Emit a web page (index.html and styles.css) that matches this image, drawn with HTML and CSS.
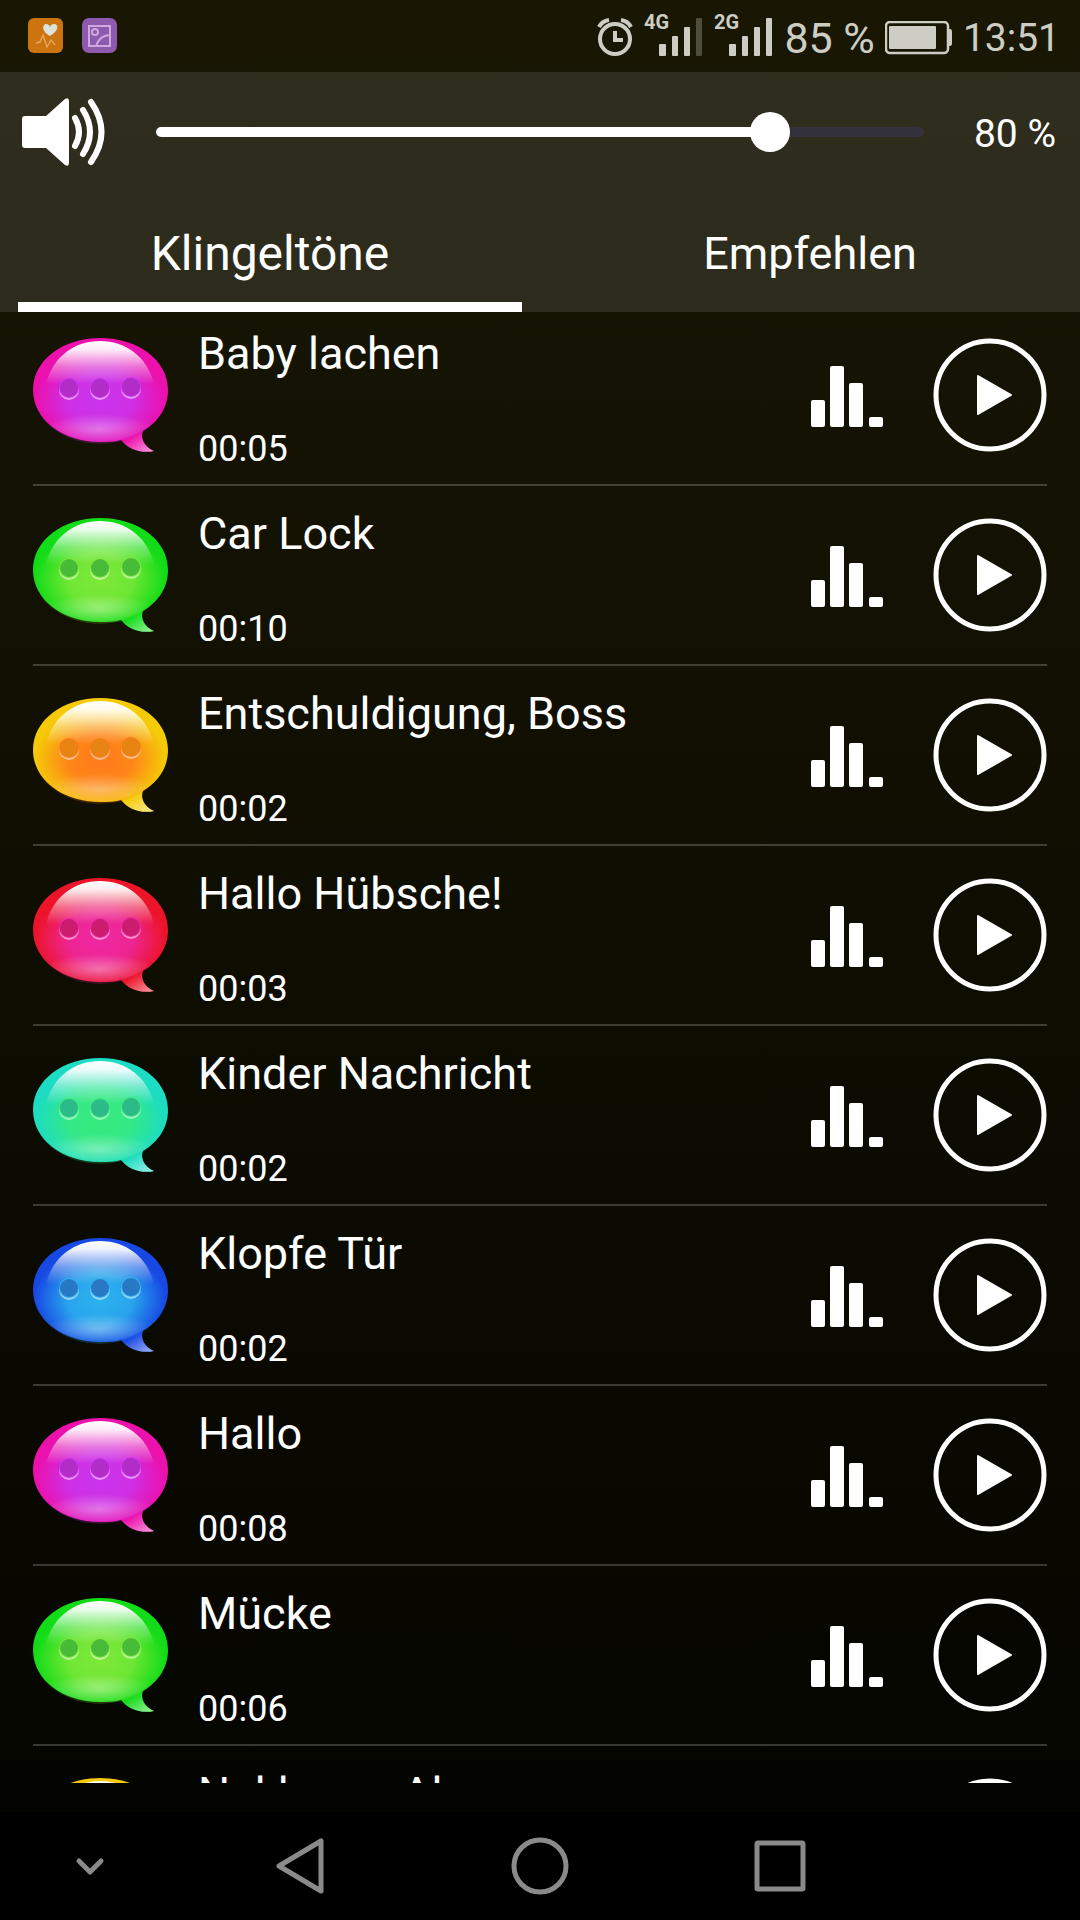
FILE: index.html
```html
<!DOCTYPE html>
<html lang="de">
<head>
<meta charset="utf-8">
<meta name="viewport" content="width=device-width, initial-scale=1">
<title>Klingeltöne</title>
<link rel="stylesheet" href="styles.css">
</head>
<body>
<svg class="sprite" aria-hidden="true">
  <defs>
    <radialGradient id="core-fade" cx="0.5" cy="0.55" r="0.5">
      <stop offset="0" stop-color="#fff"/>
      <stop offset="0.5" stop-color="#fff" stop-opacity="0.85"/>
      <stop offset="1" stop-color="#fff" stop-opacity="0"/>
    </radialGradient>
    <mask id="core-mask" maskContentUnits="userSpaceOnUse">
      <ellipse cx="67" cy="56" rx="66" ry="50" fill="url(#core-fade)"/>
    </mask>
    <clipPath id="body-clip"><ellipse cx="67" cy="52" rx="67" ry="52"/></clipPath>
    <linearGradient id="gloss" x1="0" y1="0" x2="0" y2="1">
      <stop offset="0" stop-color="#fff"/>
      <stop offset="0.2" stop-color="#fff" stop-opacity="0.92"/>
      <stop offset="0.6" stop-color="#fff" stop-opacity="0.38"/>
      <stop offset="1" stop-color="#fff" stop-opacity="0"/>
    </linearGradient>
    <radialGradient id="glow" cx="0.5" cy="0.5" r="0.5">
      <stop offset="0" stop-color="#fff" stop-opacity="0.35"/>
      <stop offset="1" stop-color="#fff" stop-opacity="0"/>
    </radialGradient>
    <linearGradient id="tail-shine" x1="0" y1="0" x2="1" y2="1">
      <stop offset="0.3" stop-color="#fff" stop-opacity="0"/>
      <stop offset="1" stop-color="#fff" stop-opacity="0.6"/>
    </linearGradient>
  </defs>
  <symbol id="bubble" viewBox="0 0 136 115">
    <path class="bubble-edge" d="M67 0C105 0 135 22 135 52C135 70 125 84 110 93C107 101 112 109 121 113C108 116 95 111 88 102C82 104 74 104 67 104C30 104 0 82 0 52C0 22 30 0 67 0Z"/>
    <ellipse class="bubble-core" cx="67" cy="56" rx="66" ry="50" mask="url(#core-mask)"/>
    <ellipse cx="66" cy="91" rx="56" ry="15" fill="url(#glow)" clip-path="url(#body-clip)"/>
    <path d="M88 98L110 93C107 101 112 109 121 113C108 116 95 111 88 102Z" fill="url(#tail-shine)"/>
    <path d="M67 3C92 3 114 18 121 46H13C20 18 42 3 67 3Z" fill="url(#gloss)"/>
    <g fill="#fff" opacity="0.5"><circle cx="36" cy="52" r="10"/><circle cx="67" cy="52" r="10"/><circle cx="98" cy="51" r="10"/></g>
    <g class="bubble-core"><circle cx="36" cy="50" r="10"/><circle cx="67" cy="50" r="10"/><circle cx="98" cy="49" r="10"/></g>
    <g class="bubble-dot"><circle cx="36" cy="50" r="9"/><circle cx="67" cy="50" r="9"/><circle cx="98" cy="49" r="9"/></g>
  </symbol>
  <symbol id="levels" viewBox="0 0 72 115">
    <rect x="0" y="62" width="14" height="27" rx="2"/><rect x="19" y="28" width="14" height="61" rx="2"/><rect x="38" y="45" width="14" height="44" rx="2"/><rect x="58" y="79" width="14" height="10" rx="2"/>
  </symbol>
  <symbol id="play" viewBox="0 0 115 115">
    <circle cx="58" cy="57" r="54" fill="none" stroke="#fff" stroke-width="5"/>
    <path d="M46 38L79 57L46 76Z" stroke="#fff" stroke-width="2" stroke-linejoin="round"/>
  </symbol>
</svg>

<div class="phone">
  <header class="status">
    <div class="status-apps">
      <svg class="app-icon" viewBox="0 0 36 36" aria-hidden="true">
        <rect width="35" height="35" rx="6" fill="#cc7410"/>
        <path d="M22 18C12 12 15 5 19 6Q22 7 22 9Q23 6 26 6C31 6 31 13 22 18Z" fill="#dce3dc"/>
        <path d="M8 25L12 24L15 17L19 29L23 22L27 27" fill="none" stroke="#e8a25a" stroke-width="1.5"/>
      </svg>
      <svg class="app-icon" viewBox="0 0 36 36" aria-hidden="true">
        <rect width="35" height="35" rx="7" fill="#8d5aad"/>
        <g fill="none" stroke="#cfa8e2" stroke-width="2"><rect x="7" y="8" width="21" height="20"/><circle cx="13" cy="14" r="3"/><path d="M14 28Q18 17 28 17"/></g>
      </svg>
    </div>
    <div class="status-info">
      <svg class="alarm" viewBox="0 0 38 40" aria-hidden="true">
        <g fill="none" stroke="currentColor" stroke-width="4"><circle cx="19" cy="23" r="15"/><path d="M19 15V24H27M3 11Q6 5 13 4M35 11Q32 5 25 4"/></g>
      </svg>
      <svg class="signal" viewBox="0 -4 60 54">
        <text x="0" y="16" class="signal-label">4G</text>
        <g fill="currentColor"><rect x="15" y="31" width="7" height="12" rx="1"/><rect x="28" y="23" width="6" height="20" rx="1"/><rect x="40" y="14" width="6" height="29" rx="1"/><rect x="52" y="5" width="6" height="38" rx="1" opacity="0.3"/></g>
      </svg>
      <svg class="signal" viewBox="0 -4 60 54">
        <text x="0" y="16" class="signal-label">2G</text>
        <g fill="currentColor"><rect x="15" y="31" width="7" height="12" rx="1"/><rect x="28" y="23" width="6" height="20" rx="1"/><rect x="40" y="14" width="6" height="29" rx="1"/><rect x="52" y="5" width="6" height="38" rx="1"/></g>
      </svg>
      <span class="charge">85 %</span>
      <svg class="battery" viewBox="0 0 68 34" aria-hidden="true">
        <rect x="1" y="1" width="62" height="31" rx="4" fill="none" stroke="currentColor" stroke-width="2.5"/>
        <rect x="4" y="5" width="47" height="23" rx="1" fill="currentColor"/><path d="M63 8H65Q67 8 67 11V22Q67 25 65 25H63Z" fill="currentColor"/>
      </svg>
      <time class="clock">13:51</time>
    </div>
  </header>

  <section class="panel">
    <div class="volume">
      <label class="speaker" for="volume" aria-label="Lautstärke">
        <svg viewBox="0 0 84 68" aria-hidden="true">
          <path d="M3 18H24L43 1Q47 -1 47 3V65Q47 69 43 67L24 50H3Q0 50 0 47V21Q0 18 3 18Z" fill="#fff"/>
          <g fill="none" stroke="#fff" stroke-width="6" stroke-linecap="round"><path d="M53 20Q61 34 53 48"/><path d="M61 12Q75 34 61 56"/><path d="M69 4Q90 34 69 64"/></g>
        </svg>
      </label>
      <div class="slider"><input id="volume" type="range" min="0" max="100" value="80"></div>
      <output class="volume-value" for="volume">80 %</output>
    </div>
    <div class="tabs" role="tablist">
      <button class="tab tab-active" role="tab" aria-selected="true">Klingeltöne</button>
      <button class="tab" role="tab" aria-selected="false">Empfehlen</button>
    </div>
  </section>

  <ul class="tones">
    <li class="tone pink"><svg class="bubble"><use href="#bubble"/></svg><div class="tone-text"><span class="title">Baby lachen</span><time class="length">00:05</time></div><svg class="levels"><use href="#levels"/></svg><button class="play" aria-label="Abspielen"><svg><use href="#play"/></svg></button></li>
    <li class="tone green"><svg class="bubble"><use href="#bubble"/></svg><div class="tone-text"><span class="title">Car Lock</span><time class="length">00:10</time></div><svg class="levels"><use href="#levels"/></svg><button class="play" aria-label="Abspielen"><svg><use href="#play"/></svg></button></li>
    <li class="tone yellow"><svg class="bubble"><use href="#bubble"/></svg><div class="tone-text"><span class="title">Entschuldigung, Boss</span><time class="length">00:02</time></div><svg class="levels"><use href="#levels"/></svg><button class="play" aria-label="Abspielen"><svg><use href="#play"/></svg></button></li>
    <li class="tone red"><svg class="bubble"><use href="#bubble"/></svg><div class="tone-text"><span class="title">Hallo Hübsche!</span><time class="length">00:03</time></div><svg class="levels"><use href="#levels"/></svg><button class="play" aria-label="Abspielen"><svg><use href="#play"/></svg></button></li>
    <li class="tone mint"><svg class="bubble"><use href="#bubble"/></svg><div class="tone-text"><span class="title">Kinder Nachricht</span><time class="length">00:02</time></div><svg class="levels"><use href="#levels"/></svg><button class="play" aria-label="Abspielen"><svg><use href="#play"/></svg></button></li>
    <li class="tone blue"><svg class="bubble"><use href="#bubble"/></svg><div class="tone-text"><span class="title">Klopfe Tür</span><time class="length">00:02</time></div><svg class="levels"><use href="#levels"/></svg><button class="play" aria-label="Abspielen"><svg><use href="#play"/></svg></button></li>
    <li class="tone pink"><svg class="bubble"><use href="#bubble"/></svg><div class="tone-text"><span class="title">Hallo</span><time class="length">00:08</time></div><svg class="levels"><use href="#levels"/></svg><button class="play" aria-label="Abspielen"><svg><use href="#play"/></svg></button></li>
    <li class="tone green"><svg class="bubble"><use href="#bubble"/></svg><div class="tone-text"><span class="title">Mücke</span><time class="length">00:06</time></div><svg class="levels"><use href="#levels"/></svg><button class="play" aria-label="Abspielen"><svg><use href="#play"/></svg></button></li>
    <li class="tone yellow"><svg class="bubble"><use href="#bubble"/></svg><div class="tone-text"><span class="title">Nuklearer Alarm</span></div><svg class="levels"><use href="#levels"/></svg><button class="play" aria-label="Abspielen"><svg><use href="#play"/></svg></button></li>
  </ul>

  <nav class="nav">
    <button aria-label="Leiste ausblenden"><svg viewBox="0 0 60 60"><path d="M19 25L30 36L41 25"/></svg></button>
    <button aria-label="Zurück"><svg viewBox="0 0 60 60"><path d="M9 30L51 5V55Z"/></svg></button>
    <button aria-label="Startseite"><svg viewBox="0 0 60 60"><circle cx="30" cy="30" r="26"/></svg></button>
    <button aria-label="Übersicht"><svg viewBox="0 0 60 60"><rect x="7" y="7" width="46" height="46" rx="1"/></svg></button>
  </nav>
</div>
</body>
</html>
```
FILE: styles.css
```css
* {
  box-sizing: border-box;
}

body {
  margin: 0;
  background: #000;
  color: #fff;
  font-family: Roboto, "Noto Sans", sans-serif;
}

button {
  padding: 0;
  border: 0;
  background: none;
  color: inherit;
  font: inherit;
}

svg {
  display: block;
}

.sprite {
  position: absolute;
  width: 0;
  height: 0;
}

.phone {
  display: flex;
  flex-direction: column;
  height: 100vh;
  background: linear-gradient(#191704, #050500 94%);
}

/* Status bar */
.status {
  display: flex;
  flex: none;
  justify-content: space-between;
  align-items: center;
  height: 72px;
  padding: 0 20px 0 28px;
  color: #cdcdc4;
}

.status-apps {
  display: flex;
  gap: 18px;
}

.app-icon {
  width: 36px;
  height: 36px;
}

.status-info {
  display: flex;
  align-items: center;
  gap: 10px;
}

.alarm {
  width: 38px;
  height: 40px;
}

.signal {
  width: 60px;
  height: 54px;
}

.signal-label {
  fill: currentColor;
  font-size: 20px;
  font-weight: 700;
}

.charge {
  padding-top: 4px;
  font-size: 43px;
}

.battery {
  width: 68px;
  height: 34px;
  margin-top: 4px;
}

.clock {
  padding-top: 4px;
  font-size: 39px;
}

/* Volume and tabs */
.panel {
  flex: none;
  background: rgba(255, 255, 255, 0.1);
}

.volume {
  display: flex;
  align-items: center;
  height: 120px;
  padding: 0 24px 0 22px;
}

.speaker {
  width: 84px;
}

.slider {
  position: relative;
  flex: 1;
  margin: 0 30px;
}

.slider::before {
  content: "";
  position: absolute;
  inset: 15px 20px;
  border-radius: 5px;
  background: linear-gradient(90deg, #fff 80%, #33313a 80%);
}

.slider input {
  position: relative;
  display: block;
  width: 100%;
  height: 40px;
  margin: 0;
  background: none;
  appearance: none;
}

.slider input::-webkit-slider-thumb {
  width: 40px;
  height: 40px;
  border-radius: 50%;
  background: #fff;
  appearance: none;
}

.volume-value {
  padding-top: 4px;
  font-size: 39px;
}

.tabs {
  display: grid;
  grid-template-columns: 1fr 1fr;
  height: 120px;
}

.tab {
  margin: 0 18px;
  padding-top: 12px;
  border-bottom: 10px solid transparent;
  font-size: 45px;
}

.tab-active {
  border-color: #fff;
  font-size: 48px;
}

/* Ringtone list */
.tones {
  display: flex;
  flex: 1;
  flex-direction: column;
  gap: 6px;
  min-height: 0;
  margin: 0 0 29px;
  padding: 0 33px;
  overflow-y: auto;
  scrollbar-width: none;
  list-style: none;
}

.tone {
  display: flex;
  flex: none;
  align-items: flex-start;
  height: 174px;
  padding-top: 26px;
  border-bottom: 2px solid rgba(255, 255, 255, 0.2);
}

.bubble {
  width: 136px;
  height: 115px;
}

.bubble-edge {
  fill: var(--edge);
}

.bubble-core {
  fill: var(--core);
}

.bubble-dot {
  fill: var(--dot);
}

.tone-text {
  display: flex;
  flex: 1;
  flex-direction: column;
  gap: 47px;
  margin: -10px 0 0 29px;
}

.title {
  font-size: 45px;
  line-height: 52px;
}

.length {
  font-size: 36px;
  line-height: 44px;
}

.levels {
  width: 72px;
  height: 115px;
  margin-right: 49px;
  fill: #fff;
}

.play svg {
  width: 115px;
  height: 115px;
  fill: #fff;
}

.pink { --edge: #ec10ac; --core: #c935ee; --dot: #b22cc8; }
.green { --edge: #12dc18; --core: #7fe83a; --dot: #48bc38; }
.yellow { --edge: #f5cb08; --core: #ff7a1c; --dot: #e88414; }
.red { --edge: #ec1428; --core: #ee28a4; --dot: #cc1c70; }
.mint { --edge: #1cdcc4; --core: #38ea7c; --dot: #2cba88; }
.blue { --edge: #1848e4; --core: #2cb4ee; --dot: #2878c4; }

/* Navigation bar */
.nav {
  display: grid;
  flex: none;
  grid-template-columns: 3fr 4fr 4fr 4fr 3fr;
  height: 108px;
  background: #000;
}

.nav button {
  display: grid;
  place-items: center;
}

.nav svg {
  width: 60px;
  height: 60px;
  fill: none;
  stroke: #8a8a8a;
  stroke-width: 5;
  stroke-linecap: round;
  stroke-linejoin: round;
}
```
